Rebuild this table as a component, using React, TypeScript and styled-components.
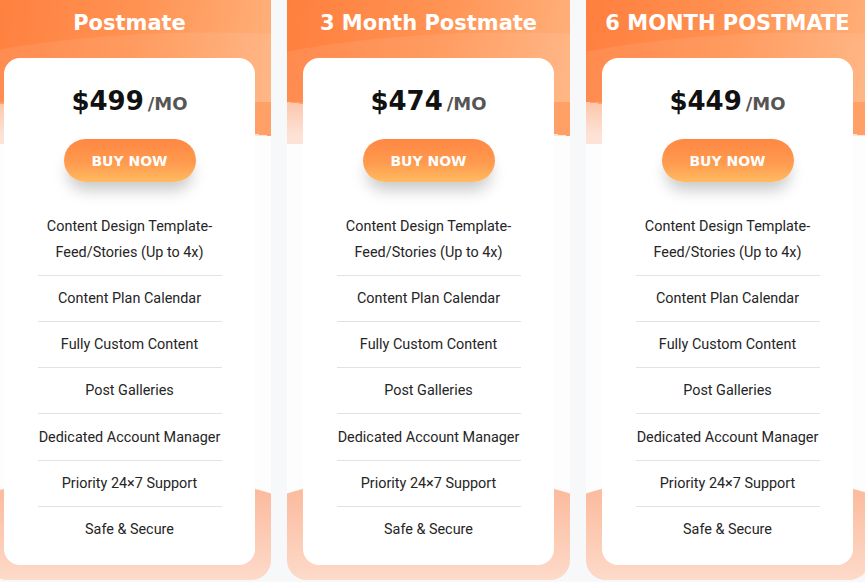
import React from 'react';
import styled, { createGlobalStyle } from 'styled-components';

interface Plan {
    title: string;
    price: string;
}

const plans: Plan[] = [
    { title: 'Postmate', price: '$499' },
    { title: '3 Month Postmate', price: '$474' },
    { title: '6 MONTH POSTMATE', price: '$449' },
];

const features = [
    'Content Design Template-\nFeed/Stories (Up to 4x)',
    'Content Plan Calendar',
    'Fully Custom Content',
    'Post Galleries',
    'Dedicated Account Manager',
    'Priority 24×7 Support',
    'Safe & Secure',
];

const GlobalStyle = createGlobalStyle`
    html, body {
        margin: 0;
        padding: 0;
        overflow: hidden;
        background: #f7f8fa;
    }
`;

const Row = styled.div`
    display: flex;
    gap: 16px;
    margin-left: -12px;
    height: 582px;
`;

const Panel = styled.div`
    flex: 0 0 283px;
    height: 580px;
    box-sizing: border-box;
    padding-top: 10px;
    border-radius: 0 0 20px 20px;
    display: flex;
    flex-direction: column;
    align-items: center;
    background:
        radial-gradient(244px 107px at 50% 100%, transparent 99%, #fdfdfe 100%) bottom / 100% 107px no-repeat,
        linear-gradient(#fbb595, #fddac9) bottom / 100% 107px no-repeat,
        radial-gradient(520px 200px at 78% 232px, rgba(255, 255, 255, 0.08) 99.5%, transparent 100%) 0 0 / 100% 102px no-repeat,
        linear-gradient(to bottom left, #ffa167 50%, transparent 50%) 0 102px / 100% 34px no-repeat,
        linear-gradient(100deg, #ff7f3e 0%, #ff9252 50%, #ffb17c 100%) 0 0 / 100% 102px no-repeat,
        linear-gradient(to bottom right, #fde3d7 50%, transparent 50%) 0 136px / 100% 8px no-repeat,
        linear-gradient(#fcc3a6 72%, #fde3d7 100%) 0 0 / 100% 136px no-repeat,
        #fdfdfe;
`;

const Title = styled.h2`
    margin: 0 0 22px;
    font-family: 'DejaVu Sans', 'Liberation Sans', sans-serif;
    font-weight: bold;
    font-size: 21px;
    line-height: 26px;
    color: #fff;
    white-space: nowrap;
`;

const Card = styled.div`
    width: 251px;
    box-sizing: border-box;
    padding: 25px 33px 13px;
    background: #fff;
    border-radius: 16px;
    display: flex;
    flex-direction: column;
    align-items: center;
`;

const Price = styled.div`
    display: flex;
    align-items: baseline;
    height: 36px;
    font-family: 'DejaVu Sans', 'Liberation Sans', sans-serif;
    font-weight: bold;
    line-height: 36px;
`;

const Amount = styled.span`
    font-size: 26px;
    color: #111;
`;

const Per = styled.span`
    margin-left: 4px;
    font-size: 18px;
    color: #555;
`;

const BuyButton = styled.button`
    margin-top: 20px;
    width: 132px;
    height: 43px;
    border: none;
    border-radius: 22px;
    background: linear-gradient(180deg, #ff8744 0%, #ff9a4e 55%, #ffbb62 100%);
    box-shadow: 0 12px 16px -4px rgba(0, 0, 0, 0.22);
    color: #fff;
    font-family: 'DejaVu Sans', 'Liberation Sans', sans-serif;
    font-weight: bold;
    font-size: 14px;
    cursor: pointer;
`;

const FeatureList = styled.ul`
    list-style: none;
    margin: 22px 0 0;
    padding: 0;
    width: 184px;
`;

const Feature = styled.li`
    padding: 10px 0 9px;
    border-bottom: 1px solid #e2e2e2;
    font-family: Roboto, 'Liberation Sans', sans-serif;
    font-size: 14.4px;
    line-height: 26px;
    color: #252525;
    text-align: center;
    white-space: pre-line;

    &:nth-child(n + 5) {
        padding-top: 10.5px;
    }

    &:last-child {
        border-bottom: none;
        padding-top: 10px;
    }
`;

const App = () => {
    return (
        <>
            <GlobalStyle />
            <Row>
                {plans.map(plan => (
                    <Panel key={plan.title}>
                        <Title>{plan.title}</Title>
                        <Card>
                            <Price>
                                <Amount>{plan.price}</Amount>
                                <Per>/MO</Per>
                            </Price>
                            <BuyButton>BUY NOW</BuyButton>
                            <FeatureList>
                                {features.map(f => (
                                    <Feature key={f}>{f}</Feature>
                                ))}
                            </FeatureList>
                        </Card>
                    </Panel>
                ))}
            </Row>
        </>
    );
};

export default App;
